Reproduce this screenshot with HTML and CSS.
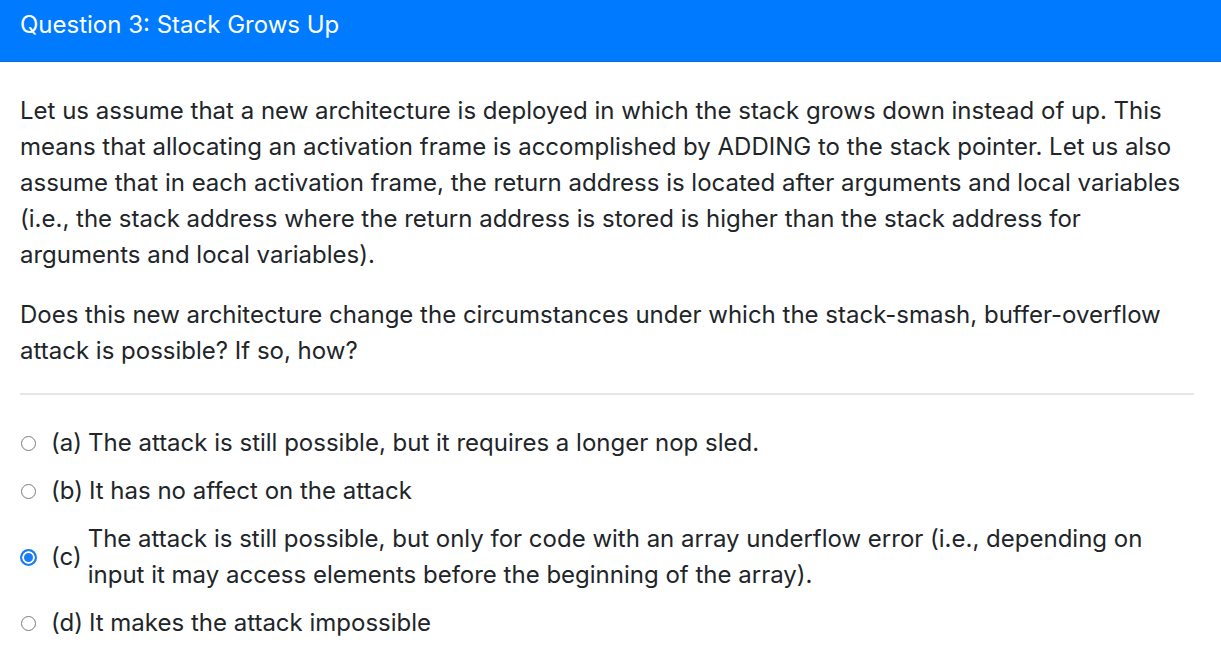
FILE: index.html
```html
<!DOCTYPE html>
<html>
<head>
<meta charset="utf-8">
<link rel="stylesheet" href="styles.css">
</head>
<body>
<div class="card">
  <div class="card-header">Question 3: Stack Grows Up</div>
  <div class="card-body">
    <p>Let us assume that a new architecture is deployed in which the stack grows down instead of up. This means that allocating an activation frame is accomplished by ADDING to the stack pointer. Let us also assume that in each activation frame, the return address is located after arguments and local variables (i.e., the stack address where the return address is stored is higher than the stack address for arguments and local variables).</p>
    <p>Does this new architecture change the circumstances under which the stack-smash, buffer-overflow attack is possible? If so, how?</p>
    <hr class="divider">
    <div class="options">
      <label class="option">
        <span class="radio"></span>
        <span class="letter">(a)</span>
        <span class="text">The attack is still possible, but it requires a longer nop sled.</span>
      </label>
      <label class="option">
        <span class="radio"></span>
        <span class="letter">(b)</span>
        <span class="text">It has no affect on the attack</span>
      </label>
      <label class="option">
        <span class="radio checked"></span>
        <span class="letter">(c)</span>
        <span class="text">The attack is still possible, but only for code with an array underflow error (i.e., depending on input it may access elements before the beginning of the array).</span>
      </label>
      <label class="option">
        <span class="radio"></span>
        <span class="letter">(d)</span>
        <span class="text">It makes the attack impossible</span>
      </label>
    </div>
  </div>
</div>
</body>
</html>
```

FILE: styles.css
```css
html, body {
  margin: 0;
  padding: 0;
  background: #ffffff;
}
body {
  font-family: Inter, "Noto Sans", "Liberation Sans", sans-serif;
  color: #212529;
  font-size: 24px;
  line-height: 36px;
}
.card-header {
  background: #007bff;
  color: #ffffff;
  font-size: 24px;
  line-height: 36px;
  padding: 7px 20px 18px 20px;
  border-bottom: 1px solid #0a6fdc;
}
.card-body {
  padding: 31px 27px 0 20px;
}
.card-body p {
  margin: 0 0 24px 0;
}
.divider {
  border: 0;
  border-top: 2px solid #e6e6e6;
  margin: 0 0 30px 0;
  height: 0;
}
.options {
  display: flex;
  flex-direction: column;
  gap: 12px;
}
.option {
  display: flex;
  align-items: center;
}
.radio {
  flex: 0 0 auto;
  width: 15px;
  height: 15px;
  box-sizing: border-box;
  border: 1px solid #7b7b7b;
  border-radius: 50%;
  margin: 0 15px 0 1px;
  background: #fff;
}
.radio.checked {
  width: 17px;
  height: 17px;
  border: 2px solid #1a7df6;
  background: #1a7df6;
  box-shadow: inset 0 0 0 2px #fff;
  margin: 0 14px 0 0;
}
.letter {
  flex: 0 0 auto;
  margin-right: 6px;
}
.text {
  flex: 1 1 auto;
}
```
